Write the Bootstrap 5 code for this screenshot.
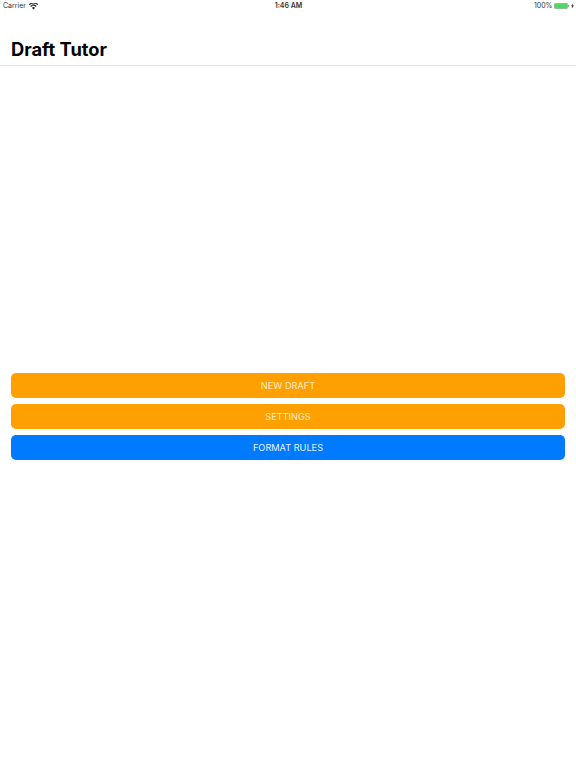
<!DOCTYPE html>
<html lang="en">
<head>
<meta charset="utf-8">
<title>Draft Tutor</title>
<link href="https://cdn.jsdelivr.net/npm/bootstrap@5.3.0/dist/css/bootstrap.min.css" rel="stylesheet">
<style>
html, body { height: 768px; overflow: hidden; background: #fff; font-family: Inter, "Liberation Sans", sans-serif; }
.app-shell { height: 768px; }
.status-bar { height: 12px; padding: 0 2px 0 3px; font-size: 7px; line-height: 12px; color: #333; }
.status-side { flex: 1 1 0; }
.status-time { font-weight: 600; }
.wifi-gap { gap: 3px; }
.batt-gap { gap: 1.5px; }
.nav-head { height: 54px; padding: 0 11px 4px; border-bottom: 1px solid #e2e2e2; }
.nav-title { margin: 0; font-size: 18.3px; line-height: 24px; font-weight: 700; color: #000; letter-spacing: 0; }
.stage { flex: 1 1 auto; padding: 307px 11px 0; gap: 6px; }
.act-btn { height: 25px; padding: 0; font-size: 9.2px; line-height: 25px; color: #fff; border: 0; border-radius: 5px; }
.act-orange, .act-orange:hover { background: #ff9f00; color: #ffeccb; }
.act-blue, .act-blue:hover { background: #007aff; color: #e8f2ff; }
</style>
</head>
<body>
<div class="app-shell d-flex flex-column">
  <div class="status-bar d-flex align-items-center">
    <div class="status-side d-flex align-items-center wifi-gap">
      <span>Carrier</span>
      <svg width="9" height="7" viewBox="0 0 18 13" aria-hidden="true"><path d="M9 13 5.8 9.2a4.6 4.6 0 0 1 6.4 0zM4.2 7.4 2.4 5.3a9.7 9.7 0 0 1 13.2 0l-1.8 2.1a7 7 0 0 0-9.6 0zM.8 3.5-.6 1.9a14.2 14.2 0 0 1 19.2 0l-1.4 1.6a12 12 0 0 0-16 0z" fill="#333"/></svg>
    </div>
    <div class="status-time">1:46 AM</div>
    <div class="status-side d-flex align-items-center justify-content-end batt-gap">
      <span>100%</span>
      <svg width="20" height="6" viewBox="0 0 20 6" aria-hidden="true"><rect x=".3" y=".3" width="13.4" height="5.4" rx="1.4" fill="#4cd964" stroke="#9a9a9a" stroke-width=".5"/><rect x="14" y="2" width="1" height="2" fill="#999"/><path d="M19 0.5 17 3.3h1.2L17.8 5.5 20 2.6h-1.2z" fill="#333"/></svg>
    </div>
  </div>
  <div class="nav-head d-flex align-items-end">
    <h1 class="nav-title">Draft Tutor</h1>
  </div>
  <div class="stage d-flex flex-column">
    <button type="button" class="btn act-btn act-orange w-100">NEW DRAFT</button>
    <button type="button" class="btn act-btn act-orange w-100">SETTINGS</button>
    <button type="button" class="btn act-btn act-blue w-100">FORMAT RULES</button>
  </div>
</div>
<script src="https://cdn.jsdelivr.net/npm/bootstrap@5.3.0/dist/js/bootstrap.bundle.min.js"></script>
</body>
</html>
